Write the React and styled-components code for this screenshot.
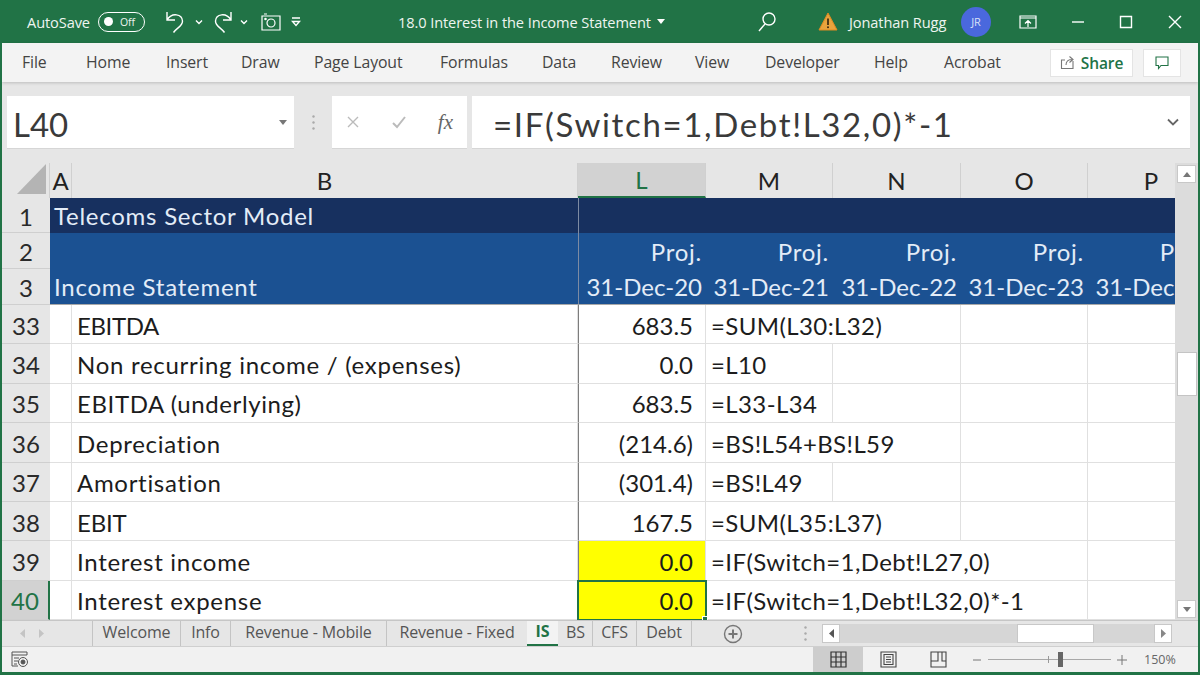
import React from 'react';
import styled, { createGlobalStyle } from 'styled-components';

const GREEN = '#217346';
const UI_FONT = '"Open Sans", "Noto Sans", sans-serif';
const CELL_FONT = 'Lato, "Open Sans", sans-serif';

const GlobalStyle = createGlobalStyle`
  html, body { margin: 0; padding: 0; background: #e6e6e6; }
  #root { width: 1200px; height: 675px; overflow: hidden; }
`;

const Window = styled.div`
  width: 1200px;
  height: 675px;
  box-sizing: border-box;
  border-left: 2px solid ${GREEN};
  border-right: 2px solid ${GREEN};
  border-bottom: 3px solid ${GREEN};
  display: flex;
  flex-direction: column;
  overflow: hidden;
  background: #e6e6e6;
  font-family: ${UI_FONT};
`;

/* title bar */
const TitleBar = styled.div`
  height: 43px;
  flex: none;
  margin: 0 -2px;
  background: ${GREEN};
  color: #eef5f0;
  display: flex;
  align-items: center;
  font-size: 14.6px;
  letter-spacing: -0.1px;
`;

const TitleSlot = styled.div`
  flex: none;
  width: ${({ $w }) => $w}px;
  display: flex;
  align-items: center;
  justify-content: ${({ $start }) => ($start ? 'flex-start' : 'center')};
  white-space: nowrap;
`;

const Toggle = styled.div`
  width: 47px;
  height: 20px;
  box-sizing: border-box;
  border: 1.5px solid #fff;
  border-radius: 11px;
  display: flex;
  align-items: center;
  gap: 7px;
  padding-left: 5px;
  font-size: 10.5px;
`;

const ToggleKnob = styled.span`
  width: 9px;
  height: 9px;
  border-radius: 50%;
  background: #fff;
`;

const Avatar = styled.div`
  width: 30px;
  height: 30px;
  flex: none;
  border-radius: 50%;
  background: #4a68dd;
  color: #d8e0f8;
  font-size: 11px;
  display: flex;
  align-items: center;
  justify-content: center;
`;

/* ribbon tabs */
const RibbonTabs = styled.div`
  height: 39px;
  flex: none;
  background: #f3f3f3;
  box-shadow: 0 1px 3px rgba(0, 0, 0, 0.18);
  display: flex;
  align-items: center;
  color: #444;
  font-size: 15.8px;
  letter-spacing: -0.1px;
  position: relative;
`;

const RibbonTab = styled.span`
  flex: none;
  width: ${({ $w }) => $w}px;
  white-space: nowrap;
  padding-bottom: 2px;
`;

const ShareButton = styled.div`
  width: 83px;
  height: 28px;
  flex: none;
  background: #fff;
  border: 1px solid #e4e4e4;
  box-sizing: border-box;
  display: flex;
  align-items: center;
  justify-content: center;
  gap: 5px;
  color: ${GREEN};
  font-weight: 600;
  font-size: 15.5px;
  margin-left: 6px;
`;

const CommentButton = styled.div`
  width: 38px;
  height: 28px;
  flex: none;
  background: #fff;
  border: 1px solid #e4e4e4;
  box-sizing: border-box;
  display: flex;
  align-items: center;
  justify-content: center;
  margin-left: 10px;
`;

/* formula bar */
const FormulaBar = styled.div`
  height: 78px;
  flex: none;
  box-sizing: border-box;
  padding: 14px 8px 11px 5px;
  display: flex;
  color: #3a3a3a;
`;

const FormulaBox = styled.div`
  background: #fff;
  border-bottom: 1px solid #d6d6d6;
  box-sizing: border-box;
  display: flex;
  align-items: center;
  font-family: ${CELL_FONT};
  font-size: 33px;
`;

const NameBox = styled(FormulaBox)`
  width: 287px;
  padding: 0 7px 0 6px;
  justify-content: space-between;
`;

const BoxText = styled.span`
  position: relative;
  top: 2px;
  letter-spacing: ${({ $track }) => $track || 0}px;
`;

const Grip = styled.div`
  width: 38px;
  display: flex;
  align-items: center;
  justify-content: center;
`;

const FxBox = styled(FormulaBox)`
  width: 135px;
  margin-right: 5px;
  padding: 0 14px;
  justify-content: space-between;
`;

const FxLabel = styled.span`
  font-family: "Liberation Serif", serif;
  font-style: italic;
  font-size: 21px;
  color: #666;
`;

const FormulaInput = styled(FormulaBox)`
  flex: 1;
  padding: 0 11px 0 21px;
  justify-content: space-between;
`;

/* sheet */
const SheetArea = styled.div`
  height: 457px;
  flex: none;
  display: flex;
  margin-top: 3px;
`;

const Sheet = styled.div`
  width: 1173px;
  flex: none;
  overflow: hidden;
  display: grid;
  grid-template-columns: 48px 22px 506px 128px 127px 128px 127px 127px;
  grid-template-rows: 35px 35px 36px 36px repeat(8, 39.375px);
  background: #fff;
  font-family: ${CELL_FONT};
  font-size: 24px;
  color: #1c1c1c;
  white-space: nowrap;
`;

const Corner = styled.div`
  background: #e6e6e6;
  display: flex;
  justify-content: flex-end;
  align-items: flex-end;
  padding: 0 3px 4px 0;
  border-right: 1px solid #d0d0d0;
`;

const CornerMark = styled.div`
  width: 29px;
  height: 30px;
  background: #b4b4b4;
  clip-path: polygon(100% 0, 100% 100%, 0 100%);
`;

const ColHead = styled.div`
  background: ${({ $active }) => ($active ? '#d2d2d2' : '#e6e6e6')};
  color: ${({ $active }) => ($active ? GREEN : '#222')};
  border-right: 1px solid #d0d0d0;
  border-bottom: ${({ $active }) => ($active ? `2px solid ${GREEN}` : 'none')};
  box-sizing: border-box;
  display: flex;
  align-items: center;
  justify-content: center;
  font-size: 24px;
`;

const RowHead = styled.div`
  background: ${({ $active }) => ($active ? '#d2d2d2' : '#e6e6e6')};
  color: ${({ $active }) => ($active ? GREEN : '#2a2a2a')};
  border-right: ${({ $active }) => ($active ? `2px solid ${GREEN}` : 'none')};
  border-bottom: 1px solid #cfcfcf;
  box-sizing: border-box;
  display: flex;
  align-items: center;
  justify-content: center;
  font-size: 24px;
  padding-top: 2px;
`;

const Banner = styled.div`
  background: ${({ $dark }) => ($dark ? '#17305f' : '#1b5192')};
  color: #e3ecf7;
  display: flex;
  align-items: center;
  justify-content: ${({ $right }) => ($right ? 'flex-end' : 'flex-start')};
  padding: ${({ $right }) => ($right ? '0 4px 0 0' : '0 0 0 4px')};
  border-left: ${({ $freeze }) => ($freeze ? '1px solid #7d8ba3' : 'none')};
  box-sizing: border-box;
  border-bottom: ${({ $last }) => ($last ? '1px solid #a8a8a8' : 'none')};
  grid-column: ${({ $span }) => ($span ? `span ${$span}` : 'auto')};
  letter-spacing: ${({ $wide }) => ($wide ? '0.75px' : '0')};
`;

const Cell = styled.div`
  background: ${({ $yellow }) => ($yellow ? '#ffff00' : '#fff')};
  border-right: 1px solid #e0e0e0;
  border-bottom: 1px solid #e0e0e0;
  box-sizing: border-box;
  display: flex;
  align-items: center;
  justify-content: ${({ $right }) => ($right ? 'flex-end' : 'flex-start')};
  padding: ${({ $right }) => ($right ? '2px 12px 0 0' : '2px 0 0 5px')};
  grid-column: ${({ $span }) => ($span ? `span ${$span}` : 'auto')};
  letter-spacing: ${({ $track }) => $track || 0}px;
  ${({ $freeze }) => $freeze && 'border-left: 1px solid #7d7d7d;'}
  ${({ $selected }) => $selected && `outline: 2px solid ${GREEN}; outline-offset: -1px; position: relative; z-index: 1;`}
`;

const FillHandle = styled.span`
  position: absolute;
  right: -3px;
  bottom: -3px;
  width: 6px;
  height: 6px;
  background: ${GREEN};
  border: 1px solid #fff;
  box-sizing: border-box;
`;

/* vertical scrollbar */
const VScroll = styled.div`
  flex: 1;
  background: #dcdcdc;
  display: flex;
  flex-direction: column;
  align-items: center;
  padding: 2px 0;
`;

const ScrollButton = styled.div`
  width: 19px;
  height: 18px;
  flex: none;
  background: #fff;
  border: 1px solid #c8c8c8;
  box-sizing: border-box;
  display: flex;
  align-items: center;
  justify-content: center;
`;

const VThumb = styled.div`
  width: 20px;
  height: 44px;
  background: #fff;
  border: 1px solid #c4c4c4;
  box-sizing: border-box;
  margin: 169px 0 auto;
`;

/* sheet tabs */
const TabBar = styled.div`
  height: 27px;
  flex: none;
  background: #e6e6e6;
  border-top: 1px solid #c6c6c6;
  border-bottom: 1px solid #cfcfcf;
  box-sizing: border-box;
  display: flex;
  align-items: center;
  color: #555;
  font-size: 16px;
  letter-spacing: -0.15px;
`;

const TabNav = styled.div`
  width: 90px;
  flex: none;
  display: flex;
  align-items: center;
  gap: 14px;
  padding-left: 18px;
  box-sizing: border-box;
`;

const SheetTab = styled.div`
  height: 100%;
  flex: none;
  width: ${({ $w }) => $w}px;
  display: flex;
  align-items: center;
  justify-content: center;
  box-sizing: border-box;
  padding-bottom: 3px;
  border-left: 1px solid ${({ $plain }) => ($plain ? 'transparent' : '#c4c4c4')};
  white-space: nowrap;
  ${({ $active }) =>
    $active &&
    `
      background: #f3f3f3;
      color: ${GREEN};
      font-weight: 700;
      border-left: none;
      border-bottom: 2px solid ${GREEN};
    `}
`;

const PlusSlot = styled.div`
  flex: none;
  width: 82px;
  height: 100%;
  box-sizing: border-box;
  border-left: 1px solid #c4c4c4;
  display: flex;
  align-items: center;
  justify-content: center;
`;

const Dots = styled.div`
  flex: none;
  width: 49px;
  box-sizing: border-box;
  padding-right: 15px;
  display: flex;
  justify-content: flex-end;
`;

const HScroll = styled.div`
  flex: 1;
  height: 19px;
  margin-right: 26px;
  display: flex;
  align-items: stretch;
  background: #d6d6d6;
`;

const HButton = styled.div`
  width: 18px;
  flex: none;
  background: #fff;
  border: 1px solid #c8c8c8;
  box-sizing: border-box;
  display: flex;
  align-items: center;
  justify-content: center;
`;

const HThumb = styled.div`
  width: 77px;
  flex: none;
  background: #fff;
  border: 1px solid #c8c8c8;
  box-sizing: border-box;
  margin-left: 177px;
  margin-right: auto;
`;

/* status bar */
const StatusBar = styled.div`
  flex: 1;
  min-height: 0;
  background: #f1f1f1;
  display: flex;
  align-items: center;
  padding: 0 22px 0 9px;
  color: #666;
  font-size: 12.5px;
`;

const ViewGroup = styled.div`
  margin-left: auto;
  height: 100%;
  display: flex;
`;

const ViewButton = styled.div`
  width: 50px;
  display: flex;
  align-items: center;
  justify-content: center;
  background: ${({ $active }) => ($active ? '#cdcdcd' : 'transparent')};
`;

const Zoomer = styled.div`
  display: flex;
  align-items: center;
  width: 155px;
  flex: none;
  margin: 0 17px 0 9px;
  gap: 6px;
`;

const ZoomTrack = styled.div`
  flex: 1;
  height: 1px;
  background: #a8a8a8;
  position: relative;
`;

const ZoomThumb = styled.span`
  position: absolute;
  left: 70px;
  top: -7px;
  width: 5px;
  height: 15px;
  background: #666;
`;

const ZoomTick = styled.span`
  position: absolute;
  left: 60px;
  top: -3px;
  width: 1px;
  height: 7px;
  background: #999;
`;

const ZoomLabel = styled.span`
  width: 32px;
  flex: none;
  white-space: nowrap;
`;

/* drawings */
const Line = ({ w, h, d, stroke = '#fff', sw = 1.4, fill = 'none', children }) => (
  <svg width={w} height={h} viewBox={`0 0 ${w} ${h}`} fill={fill} stroke={stroke} strokeWidth={sw}>
    {d && <path d={d} />}
    {children}
  </svg>
);

const Chev = () => <Line w={8} h={6} d="M1 1.500l3 3 3-3" />;
const Caret = ({ color = '#fff' }) => (
  <svg width="8" height="5" viewBox="0 0 8 5"><path d="M0 0h8L4 5z" fill={color} /></svg>
);
const ArrowUp = () => <svg width="8" height="5" viewBox="0 0 8 5"><path d="M0 5h8L4 0z" fill="#777" /></svg>;
const ArrowDown = () => <svg width="8" height="5" viewBox="0 0 8 5"><path d="M0 0h8L4 5z" fill="#777" /></svg>;
const ArrowLeft = ({ color = '#555' }) => <svg width="5" height="9" viewBox="0 0 5 9"><path d="M5 0v9L0 4.500z" fill={color} /></svg>;
const ArrowRight = ({ color = '#555' }) => <svg width="5" height="9" viewBox="0 0 5 9"><path d="M0 0v9l5-4.500z" fill={color} /></svg>;

const GripDots = () => (
  <svg width="3" height="15" viewBox="0 0 3 15" fill="#aaa">
    <circle cx="1.500" cy="1.500" r="1.200" />
    <circle cx="1.500" cy="7.500" r="1.200" />
    <circle cx="1.500" cy="13.500" r="1.200" />
  </svg>
);

const WarnIcon = () => (
  <svg width="20" height="19" viewBox="0 0 20 19">
    <path d="M10 1l9 17H1z" fill="#e8a33d" stroke="#e08a20" />
    <path d="M10 6.500v6.500" stroke="#3a2a10" strokeWidth="1.700" />
    <circle cx="10" cy="15.200" r="1" fill="#3a2a10" />
  </svg>
);

const ribbon = [
  ['File', 64], ['Home', 80], ['Insert', 75], ['Draw', 73], ['Page Layout', 126], ['Formulas', 102],
  ['Data', 69], ['Review', 84], ['View', 70], ['Developer', 109], ['Help', 70], ['Acrobat', 100],
];

const cols = ['A', 'B', 'L', 'M', 'N', 'O', 'P'];
const heads = ['L', 'M', 'N', 'O', 'P'];
const dates = ['31-Dec-20', '31-Dec-21', '31-Dec-22', '31-Dec-23', '31-Dec-24'];

const rows = [
  { n: 33, label: 'EBITDA', track: -0.4, value: '683.5', formula: '=SUM(L30:L32)', span: 2 },
  { n: 34, label: 'Non recurring income / (expenses)', track: 0.72, value: '0.0', formula: '=L10', span: 1 },
  { n: 35, label: 'EBITDA (underlying)', track: 0.6, value: '683.5', formula: '=L33-L34', span: 1 },
  { n: 36, label: 'Depreciation', track: 0.7, value: '(214.6)', formula: '=BS!L54+BS!L59', span: 2 },
  { n: 37, label: 'Amortisation', track: 0.7, value: '(301.4)', formula: '=BS!L49', span: 1 },
  { n: 38, label: 'EBIT', track: -0.2, value: '167.5', formula: '=SUM(L35:L37)', span: 2 },
  { n: 39, label: 'Interest income', track: 0.7, value: '0.0', formula: '=IF(Switch=1,Debt!L27,0)', span: 3, yellow: true },
  { n: 40, label: 'Interest expense', track: 0.7, value: '0.0', formula: '=IF(Switch=1,Debt!L32,0)*-1', span: 3, yellow: true, selected: true },
];

const tabs = [
  ['Welcome', 88], ['Info', 50], ['Revenue - Mobile', 156], ['Revenue - Fixed', 141], ['IS', 31],
  ['BS', 34], ['CFS', 44], ['Debt', 55],
];

const App = () => (
  <Window>
    <GlobalStyle />
    <TitleBar>
      <TitleSlot $w={27} />
      <TitleSlot $w={71} $start>AutoSave</TitleSlot>
      <TitleSlot $w={47}>
        <Toggle>
          <ToggleKnob />
          Off
        </Toggle>
      </TitleSlot>
      <TitleSlot $w={18} />
      <TitleSlot $w={22}><Line w={20} h={24} d="M3 2v8h8M3 10C8 2 18 4 18.500 11c.3 5-6 7-9 11.500" /></TitleSlot>
      <TitleSlot $w={28}><Chev /></TitleSlot>
      <TitleSlot $w={22}><Line w={20} h={24} d="M17 2v8H9M17 10C12 2 2 4 1.500 11c-.3 5 6 7 9 11.500" /></TitleSlot>
      <TitleSlot $w={18}><Chev /></TitleSlot>
      <TitleSlot $w={36}>
        <Line w={20} h={18} sw={1.200}>
          <path d="M1 3h18v14H1zM3 1h3" />
          <circle cx="10" cy="10" r="4" />
          <circle cx="4.500" cy="6" r=".7" />
        </Line>
      </TitleSlot>
      <TitleSlot $w={14}><Line w={10} h={10} d="M1 1h8M1.500 4.500h7L5 8.500z" /></TitleSlot>
      <TitleSlot $w={95} />
      <TitleSlot $w={259} $start>18.0 Interest in the Income Statement</TitleSlot>
      <TitleSlot $w={8}><Caret /></TitleSlot>
      <TitleSlot $w={90} />
      <TitleSlot $w={24}>
        <Line w={20} h={22}>
          <circle cx="12" cy="8" r="6" />
          <path d="M8 13l-6 7" />
        </Line>
      </TitleSlot>
      <TitleSlot $w={37} />
      <TitleSlot $w={24}><WarnIcon /></TitleSlot>
      <TitleSlot $w={9} />
      <TitleSlot $w={103} $start>Jonathan Rugg</TitleSlot>
      <TitleSlot $w={9} />
      <Avatar>JR</Avatar>
      <TitleSlot $w={22} />
      <TitleSlot $w={30}>
        <Line w={18} h={14} sw={1.200} d="M1 1h16v12H1zM1 3h16M9 12V6M6 8.500L9 5.500l3 3" />
      </TitleSlot>
      <TitleSlot $w={24} />
      <TitleSlot $w={22}><Line w={14} h={4} d="M1 2h12" /></TitleSlot>
      <TitleSlot $w={26} />
      <TitleSlot $w={22}><Line w={14} h={14} d="M1.500 1.500h11v11h-11z" /></TitleSlot>
      <TitleSlot $w={27} />
      <TitleSlot $w={22}><Line w={14} h={14} d="M1 1l12 12M13 1L1 13" /></TitleSlot>
    </TitleBar>

    <RibbonTabs>
      <RibbonTab $w={20} />
      {ribbon.map(([name, w]) => (
        <RibbonTab key={name} $w={w}>{name}</RibbonTab>
      ))}
      <ShareButton>
        <Line w={16} h={15} sw={1.100} stroke="#777" d="M13 6v7.500H1.500V5H5M6 10c0-4 3-5.500 6-5.500M9.500 1.500l3.500 3-3.500 3" />
        Share
      </ShareButton>
      <CommentButton>
        <Line w={14} h={14} sw={1.100} stroke={GREEN} d="M1 1h12v8.500H6L3.500 12.500V9.500H1z" />
      </CommentButton>
    </RibbonTabs>

    <FormulaBar>
      <NameBox>
        <BoxText>L40</BoxText>
        <Caret color="#777" />
      </NameBox>
      <Grip><GripDots /></Grip>
      <FxBox>
        <Line w={14} h={14} sw={1.400} stroke="#bbb" d="M2 2l10 10M12 2L2 12" />
        <Line w={16} h={14} sw={2} stroke="#bbb" d="M2 8l4 4 8-10" />
        <FxLabel>fx</FxLabel>
      </FxBox>
      <FormulaInput>
        <BoxText $track={1.65}>=IF(Switch=1,Debt!L32,0)*-1</BoxText>
        <Line w={12} h={8} sw={1.800} stroke="#666" d="M1 1.500l5 5 5-5" />
      </FormulaInput>
    </FormulaBar>

    <SheetArea>
      <Sheet>
        <Corner><CornerMark /></Corner>
        {cols.map((c) => (
          <ColHead key={c} $active={c === 'L'}>{c}</ColHead>
        ))}

        <RowHead>1</RowHead>
        <Banner $dark $wide $span={2}>Telecoms Sector Model</Banner>
        <Banner $dark $span={5} $freeze />

        <RowHead>2</RowHead>
        <Banner $span={2} />
        {heads.map((h, i) => (
          <Banner key={h} $right $wide $freeze={i === 0}>Proj.</Banner>
        ))}

        <RowHead>3</RowHead>
        <Banner $wide $span={2} $last>Income Statement</Banner>
        {dates.map((d, i) => (
          <Banner key={d} $right $last $freeze={i === 0}>{d}</Banner>
        ))}

        {rows.map((r) => (
          <React.Fragment key={r.n}>
            <RowHead $active={r.selected}>{r.n}</RowHead>
            <Cell />
            <Cell $track={r.track}>{r.label}</Cell>
            <Cell $right $freeze $yellow={r.yellow} $selected={r.selected}>
              {r.value}
              {r.selected && <FillHandle />}
            </Cell>
            <Cell $span={r.span} $track={0.4}>{r.formula}</Cell>
            {Array.from({ length: 4 - r.span }).map((_, i) => (
              <Cell key={i} />
            ))}
          </React.Fragment>
        ))}
      </Sheet>
      <VScroll>
        <ScrollButton><ArrowUp /></ScrollButton>
        <VThumb />
        <ScrollButton><ArrowDown /></ScrollButton>
      </VScroll>
    </SheetArea>

    <TabBar>
      <TabNav>
        <ArrowLeft color="#c4c4c4" />
        <ArrowRight color="#c4c4c4" />
      </TabNav>
      {tabs.map(([name, w]) => (
        <SheetTab key={name} $w={w} $active={name === 'IS'} $plain={name === 'BS'}>{name}</SheetTab>
      ))}
      <PlusSlot>
        <Line w={20} h={20} stroke="#777" sw={1.400}>
          <circle cx="10" cy="10" r="8.500" />
          <path d="M10 5.500v9M5.500 10h9" strokeWidth="2" />
        </Line>
      </PlusSlot>
      <Dots><GripDots /></Dots>
      <HScroll>
        <HButton><ArrowLeft /></HButton>
        <HThumb />
        <HButton><ArrowRight color="#888" /></HButton>
      </HScroll>
    </TabBar>

    <StatusBar>
      <Line w={18} h={17} stroke="#555" sw={1}>
        <path d="M1 1h15v3H1zM1 4v11h6M3 7h5M3 10h4M3 13h3" />
        <circle cx="12" cy="11" r="4.500" />
        <circle cx="12" cy="11" r="2" fill="#555" />
      </Line>
      <ViewGroup>
        <ViewButton $active>
          <Line w={17} h={17} stroke="#333" sw={1.200} d="M1 1h15v15H1zM6 1v15M11 1v15M1 6h15M1 11h15" />
        </ViewButton>
        <ViewButton>
          <Line w={17} h={17} stroke="#444" sw={1.100} d="M1 1h15v15H1zM4 3.500h9v10H4zM6 6h5M6 8.500h5M6 11h5" />
        </ViewButton>
        <ViewButton>
          <Line w={17} h={17} stroke="#444" sw={1.100} d="M1 1h15v15H1zM1 10h7V1M12 1v9h4" />
        </ViewButton>
      </ViewGroup>
      <Zoomer>
        <Line w={10} h={10} stroke="#777" sw={1} d="M1 5h8" />
        <ZoomTrack>
          <ZoomTick />
          <ZoomThumb />
        </ZoomTrack>
        <Line w={10} h={10} stroke="#777" sw={1} d="M0 5h10M5 0v10" />
      </Zoomer>
      <ZoomLabel>150%</ZoomLabel>
    </StatusBar>
  </Window>
);

export default App;
